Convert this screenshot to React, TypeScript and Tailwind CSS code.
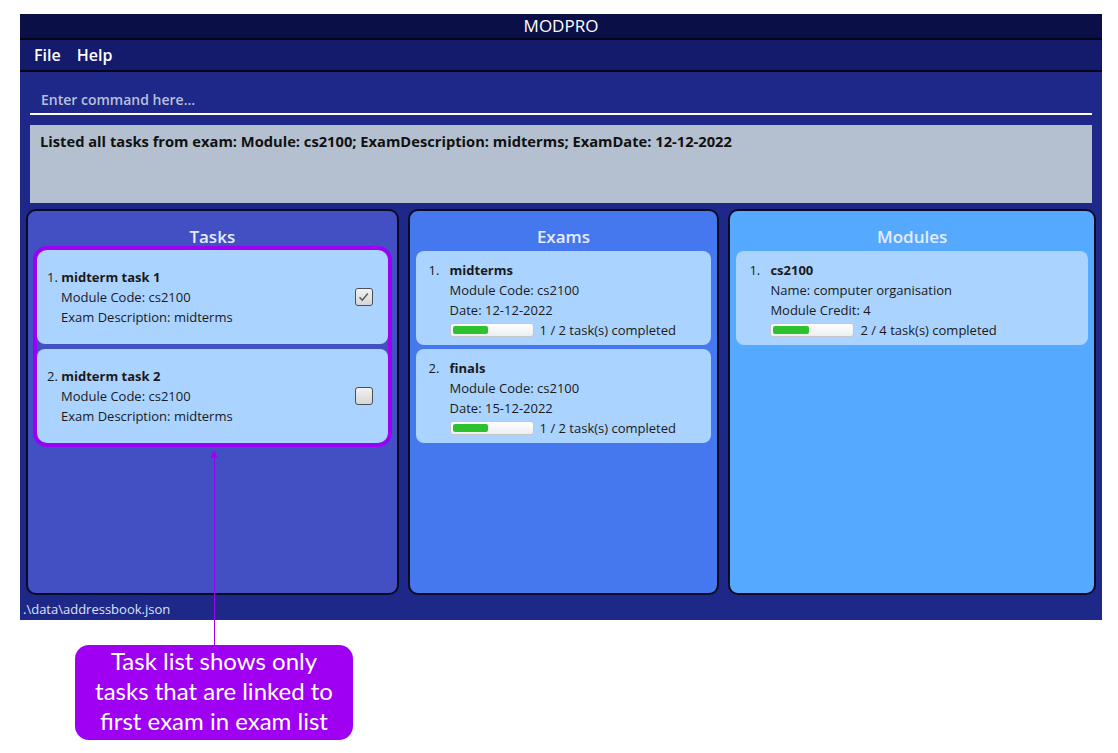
import React from "react"

const font = { fontFamily: '"Open Sans", "Noto Sans", sans-serif' }

interface Task {
  title: string
  module: string
  exam: string
  done: boolean
}

interface Exam {
  title: string
  module: string
  date: string
  done: number
  total: number
}

const tasks: Task[] = [
  { title: "midterm task 1", module: "cs2100", exam: "midterms", done: true },
  { title: "midterm task 2", module: "cs2100", exam: "midterms", done: false },
]

const exams: Exam[] = [
  { title: "midterms", module: "cs2100", date: "12-12-2022", done: 1, total: 2 },
  { title: "finals", module: "cs2100", date: "15-12-2022", done: 1, total: 2 },
]

function Progress({ done, total }: { done: number; total: number }) {
  return (
    <div className="flex items-center gap-[6px]">
      <div className="h-[14px] w-[84px] rounded-[3px] border border-[#c4c8cc] bg-gradient-to-b from-white to-[#eceef0] p-[2px]">
        <div
          className="h-full rounded-[2px] bg-[#2dc22d]"
          style={{ width: `${(done / total) * 92}%` }}
        />
      </div>
      <span>
        {done} / {total} task(s) completed
      </span>
    </div>
  )
}

function Checkbox({ checked }: { checked: boolean }) {
  return (
    <div className="flex h-[18px] w-[18px] items-center justify-center rounded-[3px] border border-[#4a4f55] bg-gradient-to-b from-[#f2f2f2] to-[#d6d6d6]">
      {checked && (
        <svg width="11" height="10" viewBox="0 0 11 10">
          <path d="M1.5 5.2 L4.3 8.2 L9.8 1.5" fill="none" stroke="#555" strokeWidth="1.4" />
        </svg>
      )}
    </div>
  )
}

function Panel({ title, bg, className, children }: { title: string; bg: string; className: string; children: React.ReactNode }) {
  return (
    <div className={`flex flex-col rounded-[10px] border-2 border-[#0b0b20] ${bg} ${className}`}>
      <div className="pt-[15px] pb-[1px] text-center text-[17px] font-semibold leading-[22px] text-[#e6ecff]">{title}</div>
      {children}
    </div>
  )
}

export default function App() {
  return (
    <div className="relative h-[753px] w-[1118px] overflow-hidden bg-white" style={font}>
      <div className="ml-[20px] mt-[14px] flex h-[606px] w-[1082px] flex-col bg-[#1e2889]">
        {/* title + menu */}
        <div className="flex h-[26px] items-center justify-center border-b-2 border-[#05051a] bg-[#0a0f48] text-[17px] text-white">
          MODPRO
        </div>
        <div className="flex h-[32px] items-center gap-[16px] border-b-2 border-[#05051a] bg-[#141a6c] px-[14px] text-[16px] font-semibold text-white">
          <span>File</span>
          <span>Help</span>
        </div>

        {/* command box */}
        <div className="mx-[10px] mt-[10px] flex h-[33px] items-center border-b-2 border-white px-[11px] pt-[3px] text-[14px] font-semibold text-[#b8c0dc]">
          Enter command here...
        </div>

        {/* result */}
        <div className="mx-[10px] mt-[10px] h-[78px] bg-[#b4c0d0] px-[10px] pt-[5px] text-[14.7px] font-bold text-[#111]">
          Listed all tasks from exam: Module: cs2100; ExamDescription: midterms; ExamDate: 12-12-2022
        </div>

        {/* panels */}
        <div className="mx-[6px] mt-[6px] flex h-[386px] gap-[9px] text-[13px] leading-[20px] text-[#1a1a1a]">
          <Panel title="Tasks" bg="bg-[#4350c4]" className="w-[374px]">
            <div className="mx-[5px] -mt-[3px] flex flex-col gap-[5px] overflow-hidden rounded-[14px] border-[4px] border-[#9b00f5] bg-[#4350c4]">
              {tasks.map((t, i) => (
                <div key={i} className="flex h-[94px] items-center justify-between rounded-[8px] bg-[#aad3ff] pl-[10px] pr-[15px]">
                  <div className="flex flex-col">
                    <div>
                      {i + 1}. <span className="font-bold">{t.title}</span>
                    </div>
                    <div className="pl-[14px]">Module Code: {t.module}</div>
                    <div className="pl-[14px]">Exam Description: {t.exam}</div>
                  </div>
                  <Checkbox checked={t.done} />
                </div>
              ))}
            </div>
          </Panel>

          <Panel title="Exams" bg="bg-[#4577ee]" className="w-[313px]">
            <div className="mx-[6px] mt-[2px] flex flex-col gap-[4px]">
              {exams.map((e, i) => (
                <div key={i} className="flex h-[94px] flex-col rounded-[8px] bg-[#aad3ff] pl-[13px] pt-[9px]">
                  <div className="flex">
                    <span className="w-[21px]">{i + 1}.</span>
                    <span className="font-bold">{e.title}</span>
                  </div>
                  <div className="pl-[21px]">Module Code: {e.module}</div>
                  <div className="pl-[21px]">Date: {e.date}</div>
                  <div className="pl-[21px]">
                    <Progress done={e.done} total={e.total} />
                  </div>
                </div>
              ))}
            </div>
          </Panel>

          <Panel title="Modules" bg="bg-[#55aaff]" className="w-[369px]">
            <div className="mx-[6px] mt-[2px] flex h-[94px] flex-col rounded-[8px] bg-[#aad3ff] pl-[13px] pt-[9px]">
              <div className="flex">
                <span className="w-[21px]">1.</span>
                <span className="font-bold">cs2100</span>
              </div>
              <div className="pl-[21px]">Name: computer organisation</div>
              <div className="pl-[21px]">Module Credit: 4</div>
              <div className="pl-[21px]">
                <Progress done={2} total={4} />
              </div>
            </div>
          </Panel>
        </div>

        <div className="ml-[3px] mt-[5px] text-[13px] text-[#dde3f5]">.\data\addressbook.json</div>
      </div>

      {/* annotation */}
      <div className="absolute left-[210px] top-[450px] flex flex-col items-center">
        <div className="h-0 w-0 border-x-[4px] border-b-[8px] border-x-transparent border-b-[#a000f2]" />
        <div className="h-[187px] w-px bg-[#a000f2]" />
      </div>
      <div className="ml-[75px] mt-[25px] flex h-[95px] w-[278px] flex-col items-center justify-center rounded-[14px] bg-[#a000f2] pb-[4px] text-[24px] leading-[30px] text-white" style={{ fontFamily: 'Lato, "Open Sans", sans-serif' }}>
        <span>Task list shows only</span>
        <span>tasks that are linked to</span>
        <span>first exam in exam list</span>
      </div>
    </div>
  )
}
